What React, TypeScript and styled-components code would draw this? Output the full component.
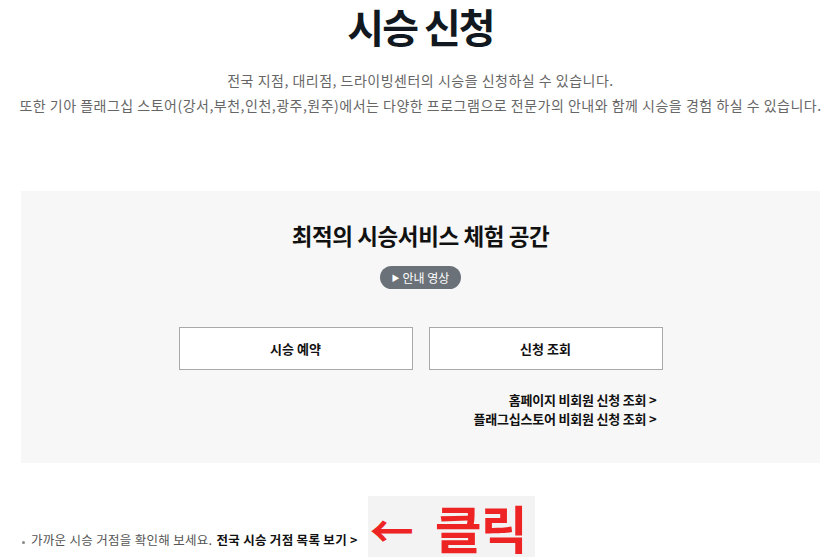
import React from 'react';
import styled, { createGlobalStyle } from 'styled-components';

const GlobalStyle = createGlobalStyle`
  html, body {
    margin: 0;
    padding: 0;
    background: #fff;
  }
  body {
    font-family: 'Noto Sans CJK KR', 'Noto Sans', sans-serif;
    color: #111;
  }
`;

const Page = styled.div`
  width: 799px;
  margin-left: 21px;
  display: flex;
  flex-direction: column;
  align-items: center;
`;

const Title = styled.h1`
  margin: 0;
  font-size: 40px;
  line-height: 52px;
  font-weight: 700;
  letter-spacing: -2px;
  color: #111820;
`;

const Intro = styled.p`
  margin: 16px 0 0;
  font-size: 14px;
  line-height: 25px;
  color: #666;
  text-align: center;
  letter-spacing: 0.5px;
  white-space: nowrap;
`;

const Panel = styled.section`
  align-self: stretch;
  margin-top: 73px;
  height: 272px;
  box-sizing: border-box;
  background: #f7f7f7;
  display: flex;
  flex-direction: column;
  align-items: center;
  padding-top: 27px;
`;

const PanelTitle = styled.h2`
  margin: 0;
  font-size: 22.5px;
  line-height: 34px;
  font-weight: 700;
  letter-spacing: -0.4px;
  color: #111;
`;

const VideoPill = styled.button`
  margin-top: 14px;
  height: 23px;
  padding: 0 12px;
  border: 0;
  border-radius: 12px;
  background: #6b7178;
  color: #fff;
  font-family: inherit;
  font-size: 12px;
  line-height: 23px;
  display: flex;
  align-items: center;
  gap: 3px;

  span.tri {
    font-size: 8px;
  }
`;

const ButtonRow = styled.div`
  margin-top: 38px;
  display: flex;
  gap: 16px;
`;

const ActionButton = styled.button`
  width: 234px;
  height: 43px;
  box-sizing: border-box;
  background: #fff;
  border: 1px solid #a9a9a9;
  font-family: inherit;
  font-size: 13px;
  font-weight: 700;
  color: #111;
`;

const LinkList = styled.div`
  width: 484px;
  margin-top: 20px;
  display: flex;
  flex-direction: column;
  align-items: flex-end;
  padding-right: 6px;
  box-sizing: border-box;
`;

const MoreLink = styled.a`
  font-size: 13px;
  line-height: 19px;
  font-weight: 700;
  color: #111;
  text-decoration: none;
  letter-spacing: -0.2px;
`;

const Footer = styled.div`
  align-self: stretch;
  margin-top: 33px;
  display: flex;
  align-items: flex-end;
  gap: 10px;
`;

const Notice = styled.p`
  margin: 0 0 8px;
  font-size: 12.5px;
  line-height: 20px;
  color: #555;
  letter-spacing: 0.3px;
  display: flex;
  align-items: center;
  white-space: nowrap;

  &::before {
    content: '';
    width: 3px;
    height: 3px;
    border-radius: 50%;
    background: #888;
    margin: 4px 6px 0 1px;
  }

  strong {
    margin-left: 4px;
    color: #111;
    font-weight: 700;
  }
`;

const Callout = styled.div`
  width: 167px;
  height: 62px;
  background: #f3f3f3;
  color: #ee2424;
  display: flex;
  align-items: center;
  padding-left: 2px;
  box-sizing: border-box;
  gap: 21px;
  overflow: visible;

  .arrow {
    font-size: 44px;
    font-weight: 700;
    line-height: 48px;
    margin-top: 4px;
  }

  .word {
    font-size: 51px;
    font-weight: 700;
    line-height: 56px;
    letter-spacing: -1px;
  }
`;

export default function App() {
  return (
    <>
      <GlobalStyle />
      <Page>
        <Title>시승 신청</Title>
        <Intro>
          전국 지점, 대리점, 드라이빙센터의 시승을 신청하실 수 있습니다.
          <br />
          또한 기아 플래그십 스토어(강서,부천,인천,광주,원주)에서는 다양한 프로그램으로 전문가의 안내와 함께 시승을 경험 하실 수 있습니다.
        </Intro>
        <Panel>
          <PanelTitle>최적의 시승서비스 체험 공간</PanelTitle>
          <VideoPill>
            <span className="tri">▶</span> 안내 영상
          </VideoPill>
          <ButtonRow>
            <ActionButton>시승 예약</ActionButton>
            <ActionButton>신청 조회</ActionButton>
          </ButtonRow>
          <LinkList>
            <MoreLink href="#">홈페이지 비회원 신청 조회 &gt;</MoreLink>
            <MoreLink href="#">플래그십스토어 비회원 신청 조회 &gt;</MoreLink>
          </LinkList>
        </Panel>
        <Footer>
          <Notice>
            가까운 시승 거점을 확인해 보세요.
            <strong>전국 시승 거점 목록 보기 &gt;</strong>
          </Notice>
          <Callout>
            <span className="arrow">←</span>
            <span className="word">클릭</span>
          </Callout>
        </Footer>
      </Page>
    </>
  );
}
